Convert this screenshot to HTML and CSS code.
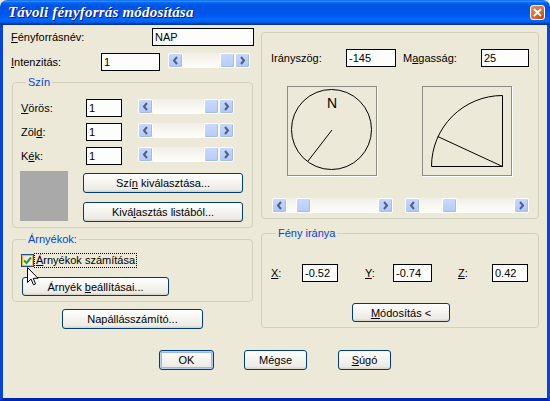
FILE: index.html
```html
<!DOCTYPE html>
<html lang="hu">
<head>
    <meta charset="UTF-8">
    <meta name="viewport" content="width=device-width, initial-scale=1.0">
    <title>Távoli fényforrás módosítása</title>
    <link rel="stylesheet" href="styles.css">
</head>
<body>
    <div class="window">
        <div class="titlebar">
            <span class="title">Távoli fényforrás módosítása</span>
            <button class="close" aria-label="Bezárás">
                <svg width="9" height="9" viewBox="0 0 9 9"><path d="M1 1L8 8M8 1L1 8" stroke="#fff" stroke-width="2"/></svg>
            </button>
        </div>
        <div class="frame">
            <div class="columns">
                <!-- left side: name, intensity, colour, shadows -->
                <div class="col-left">
                    <div class="row">
                        <label class="lbl lbl-name"><u>F</u>ényforrásnév:</label>
                        <input class="field field-name" value="NAP">
                    </div>
                    <div class="row row-int">
                        <label class="lbl lbl-int"><u>I</u>ntenzitás:</label>
                        <input class="field field-int" value="1">
                        <div class="scroll scroll-int">
                            <span class="sb-btn"><svg width="13" height="13" viewBox="0 0 13 13"><path d="M8 3L5 6.5L8 10" /></svg></span>
                            <span class="sb-track"><span class="sb-thumb thumb-end"></span></span>
                            <span class="sb-btn"><svg width="13" height="13" viewBox="0 0 13 13"><path d="M5 3L8 6.5L5 10" /></svg></span>
                        </div>
                    </div>

                    <fieldset class="group group-color">
                        <legend>Szín</legend>
                        <div class="row row-rgb">
                            <label class="lbl lbl-rgb"><u>V</u>örös:</label>
                            <input class="field field-rgb" value="1">
                            <div class="scroll scroll-rgb">
                                <span class="sb-btn"><svg width="13" height="13" viewBox="0 0 13 13"><path d="M8 3L5 6.5L8 10" /></svg></span>
                                <span class="sb-track"><span class="sb-thumb thumb-end"></span></span>
                                <span class="sb-btn"><svg width="13" height="13" viewBox="0 0 13 13"><path d="M5 3L8 6.5L5 10" /></svg></span>
                            </div>
                        </div>
                        <div class="row row-rgb">
                            <label class="lbl lbl-rgb">Zöl<u>d</u>:</label>
                            <input class="field field-rgb" value="1">
                            <div class="scroll scroll-rgb">
                                <span class="sb-btn"><svg width="13" height="13" viewBox="0 0 13 13"><path d="M8 3L5 6.5L8 10" /></svg></span>
                                <span class="sb-track"><span class="sb-thumb thumb-end"></span></span>
                                <span class="sb-btn"><svg width="13" height="13" viewBox="0 0 13 13"><path d="M5 3L8 6.5L5 10" /></svg></span>
                            </div>
                        </div>
                        <div class="row row-rgb">
                            <label class="lbl lbl-rgb">K<u>é</u>k:</label>
                            <input class="field field-rgb" value="1">
                            <div class="scroll scroll-rgb">
                                <span class="sb-btn"><svg width="13" height="13" viewBox="0 0 13 13"><path d="M8 3L5 6.5L8 10" /></svg></span>
                                <span class="sb-track"><span class="sb-thumb thumb-end"></span></span>
                                <span class="sb-btn"><svg width="13" height="13" viewBox="0 0 13 13"><path d="M5 3L8 6.5L5 10" /></svg></span>
                            </div>
                        </div>
                        <div class="swatch-row">
                            <div class="swatch"></div>
                            <div class="swatch-btns">
                                <button class="btn btn-pick">Szí<u>n</u> kiválasztása...</button>
                                <button class="btn btn-list">Kivá<u>l</u>asztás listából...</button>
                            </div>
                        </div>
                    </fieldset>

                    <fieldset class="group group-shadow">
                        <legend>Árnyékok:</legend>
                        <div class="check-row">
                            <span class="check">
                                <svg width="9" height="9" viewBox="0 0 9 9"><path d="M1 4.5L3.5 7L8 1.5" fill="none" stroke="#21a121" stroke-width="2"/></svg>
                            </span>
                            <span class="check-text"><u>Á</u>rnyékok számítása</span>
                        </div>
                        <button class="btn btn-shadow">Árnyék <u>b</u>eállításai...</button>
                    </fieldset>

                    <button class="btn btn-sun">Napállásszámító...</button>
                </div>

                <!-- right side: direction pickers -->
                <div class="col-right">
                    <div class="panel">
                        <div class="row row-angles">
                            <label class="lbl lbl-azi">Irányszög:</label>
                            <input class="field field-azi" value="-145">
                            <label class="lbl lbl-alt">M<u>a</u>gasság:</label>
                            <input class="field field-alt" value="25">
                        </div>
                        <div class="views">
                            <div class="view">
                                <svg width="88" height="88" viewBox="0 0 88 88">
                                    <circle cx="43.5" cy="42.5" r="40" fill="none" stroke="#000" stroke-width="1"/>
                                    <text x="44" y="21" text-anchor="middle" class="compass-n">N</text>
                                    <line x1="44" y1="43" x2="20" y2="74" stroke="#000" stroke-width="1"/>
                                </svg>
                            </div>
                            <div class="view view-alt">
                                <svg width="88" height="88" viewBox="0 0 88 88">
                                    <path d="M8.5 79.5A71 71 0 0 1 79.5 8.5V79.5Z" fill="none" stroke="#000" stroke-width="1"/>
                                    <line x1="79.5" y1="79.5" x2="14.7" y2="49.5" stroke="#000" stroke-width="1"/>
                                </svg>
                            </div>
                        </div>
                        <div class="row row-view-scroll">
                            <div class="scroll scroll-azi">
                                <span class="sb-btn"><svg width="13" height="13" viewBox="0 0 13 13"><path d="M8 3L5 6.5L8 10" /></svg></span>
                                <span class="sb-track"><span class="sb-thumb" style="margin-left: 9px"></span></span>
                                <span class="sb-btn"><svg width="13" height="13" viewBox="0 0 13 13"><path d="M5 3L8 6.5L5 10" /></svg></span>
                            </div>
                            <div class="scroll scroll-alt">
                                <span class="sb-btn"><svg width="13" height="13" viewBox="0 0 13 13"><path d="M8 3L5 6.5L8 10" /></svg></span>
                                <span class="sb-track"><span class="sb-thumb" style="margin-left: 22px"></span></span>
                                <span class="sb-btn"><svg width="13" height="13" viewBox="0 0 13 13"><path d="M5 3L8 6.5L5 10" /></svg></span>
                            </div>
                        </div>
                    </div>

                    <fieldset class="group group-dir">
                        <legend>Fény iránya</legend>
                        <div class="row row-xyz">
                            <label class="lbl lbl-x"><u>X</u>:</label>
                            <input class="field field-x" value="-0.52">
                            <label class="lbl lbl-y"><u>Y</u>:</label>
                            <input class="field field-y" value="-0.74">
                            <label class="lbl lbl-z"><u>Z</u>:</label>
                            <input class="field field-z" value="0.42">
                        </div>
                        <button class="btn btn-modify"><u>M</u>ódosítás &lt;</button>
                    </fieldset>
                </div>
            </div>

            <div class="actions">
                <button class="btn btn-ok">OK</button>
                <button class="btn btn-cancel">Mégse</button>
                <button class="btn btn-help"><u>S</u>úgó</button>
            </div>
        </div>

        <svg class="cursor" width="12" height="19" viewBox="0 0 12 19">
            <path d="M0.5 0.5V15.5L4 12L6.5 17.8L8.6 16.9L6.2 11.3H11Z" fill="#fff" stroke="#000" stroke-width="1"/>
        </svg>
    </div>
</body>
</html>
```

FILE: styles.css
```css
/* Window frame */
body {
    margin: 0;
    font-family: 'Liberation Sans', Arial, sans-serif;
    font-size: 11px;
    color: #000;
    background: #ece9d8;
}

.window {
    position: relative;
    width: 550px;
    height: 401px;
    display: flex;
    flex-direction: column;
}

.titlebar {
    height: 25px;
    box-sizing: border-box;
    display: flex;
    align-items: center;
    justify-content: space-between;
    padding: 0 5px 0 8px;
    border-radius: 7px 7px 0 0;
    background: linear-gradient(to bottom, #0058ee 0%, #3593ff 4%, #288eff 6%, #127dff 8%, #036ffc 10%, #0262ee 14%, #0057e5 20%, #0054e3 24%, #0055eb 56%, #005bf5 66%, #026afe 76%, #0062ef 86%, #0052d6 92%, #0040ab 94%, #003092 100%);
}

.title {
    font-family: 'Liberation Serif', 'Times New Roman', serif;
    font-weight: bold;
    font-style: italic;
    font-size: 15px;
    color: #fff;
    text-shadow: 1px 1px #0f1089;
    letter-spacing: 0.2px;
}

.close {
    width: 15px;
    height: 15px;
    padding: 0;
    display: flex;
    align-items: center;
    justify-content: center;
    border: 1px solid #fff;
    border-radius: 3px;
    background: radial-gradient(circle at 80% 85%, #cc4600 0%, #dc6527 40%, #e5805a 80%, #f2a48a 100%);
}

.frame {
    flex: 1;
    border: 3px solid #0843d6;
    border-top: 0;
    border-bottom-color: #0025b0;
    padding: 3px 8px 0 8px;
    background: #ece9d8;
}

.columns {
    display: flex;
}

.col-left {
    width: 244px;
}

.col-right {
    width: 278px;
    margin-left: 6px;
}

/* Generic controls */
.row {
    display: flex;
    align-items: center;
    height: 18px;
}

.lbl {
    flex: none;
    white-space: nowrap;
}

.field {
    box-sizing: border-box;
    height: 18px;
    border: 1px solid #000;
    background: #fdfdfb;
    font: inherit;
    padding: 0 2px;
    margin: 0;
}

.btn {
    box-sizing: border-box;
    height: 20px;
    padding: 0;
    border: 1px solid #003c74;
    border-radius: 3px;
    background: linear-gradient(to bottom, #fff 0%, #f4f3ee 50%, #ecebe6 86%, #d6d0c5 100%);
    font: inherit;
    color: #000;
}

.scroll {
    display: flex;
    height: 15px;
    align-self: flex-start;
}

.sb-btn {
    width: 15px;
    height: 15px;
    box-sizing: border-box;
    display: flex;
    align-items: center;
    justify-content: center;
    border: 1px solid #fff;
    border-radius: 2px;
    background: linear-gradient(to bottom, #c8d8fd 0%, #bccffb 50%, #b2c8f7 100%);
    box-shadow: inset -1px -1px #a4bcec;
}

.sb-btn path {
    fill: none;
    stroke: #4d6185;
    stroke-width: 2;
}

.sb-track {
    flex: 1;
    display: flex;
    background: linear-gradient(to bottom, #f1efe6, #fefefb);
}

.sb-thumb {
    width: 15px;
    height: 15px;
    box-sizing: border-box;
    border: 1px solid #fff;
    border-radius: 2px;
    background: linear-gradient(to bottom, #c9d9fd, #b5cbf9);
    box-shadow: inset -1px -1px #a4bcec;
}

.thumb-end {
    margin-left: auto;
}

/* Group boxes */
.group {
    box-sizing: border-box;
    margin: 0;
    min-width: 0;
    border: 1px solid #d0d0bf;
    border-radius: 4px;
}

.group legend {
    padding: 0 2px;
    margin-left: 5px;
    line-height: 13px;
    color: #0046d5;
}

/* Left column */
.lbl-name {
    width: 141px;
}

.field-name {
    width: 102px;
}

.row-int {
    margin-top: 7px;
}

.lbl-int {
    width: 90px;
}

.field-int {
    width: 59px;
}

.scroll-int {
    width: 82px;
    margin-left: 8px;
}

.group-color {
    width: 241px;
    margin: 5px 0 0 1px;
    padding: 10px 8px 5px 8px;
}

.row-rgb {
    margin-bottom: 6px;
}

.lbl-rgb {
    width: 65px;
}

.field-rgb {
    width: 36px;
}

.scroll-rgb {
    width: 96px;
    margin-left: 16px;
}

.swatch-row {
    display: flex;
}

.swatch {
    width: 48px;
    height: 50px;
    margin-left: -1px;
    background: #a9a9a9;
}

.swatch-btns {
    display: flex;
    flex-direction: column;
    margin-left: 15px;
}

.btn-pick,
.btn-list {
    width: 160px;
}

.btn-pick {
    margin-top: 2px;
}

.btn-list {
    margin-top: 9px;
}

.group-shadow {
    width: 241px;
    margin: 5px 0 0 1px;
    padding: 7px 8px 5px 8px;
}

.check-row {
    display: flex;
    align-items: center;
    height: 15px;
}

.check {
    width: 13px;
    height: 13px;
    box-sizing: border-box;
    display: flex;
    align-items: center;
    justify-content: center;
    border: 1px solid #1c5180;
    background: linear-gradient(135deg, #dcdcd7, #fff);
    box-shadow: inset 0 0 0 1px #f8b636;
}

.check-text {
    margin-left: 1px;
    padding: 0 1px;
    line-height: 13px;
    outline: 1px dotted #000;
}

.btn-shadow {
    width: 147px;
    height: 19px;
    margin: 9px 0 0 1px;
}

.btn-sun {
    width: 141px;
    margin: 7px 0 0 51px;
}

/* Right column */
.panel {
    box-sizing: border-box;
    height: 187px;
    margin-top: 4px;
    padding: 16px 9px 0 9px;
    border: 1px solid #d0d0bf;
    border-radius: 4px;
}

.lbl-azi {
    width: 75px;
}

.field-azi {
    width: 50px;
}

.lbl-alt {
    width: 78px;
    margin-left: 7px;
}

.field-alt {
    width: 48px;
}

.views {
    display: flex;
    margin: 19px 0 0 16px;
}

.view {
    width: 90px;
    height: 90px;
    box-sizing: border-box;
    border: 1px solid #8d8d86;
    box-shadow: 1px 1px #fff;
}

.view svg {
    display: block;
}

.view-alt {
    margin-left: 45px;
}

.compass-n {
    font-family: 'Liberation Sans', Arial, sans-serif;
    font-size: 14px;
}

.row-view-scroll {
    margin: 22px 0 0 1px;
    height: 15px;
}

.scroll-azi {
    width: 121px;
}

.scroll-alt {
    width: 124px;
    margin-left: 12px;
}

.group-dir {
    width: 278px;
    margin-top: 8px;
    padding: 24px 9px 5px 9px;
}

.lbl-x {
    width: 31px;
}

.field-x,
.field-z {
    width: 36px;
}

.lbl-y {
    width: 28px;
    margin-left: 27px;
}

.field-y {
    width: 39px;
}

.lbl-z {
    width: 34px;
    margin-left: 26px;
}

.btn-modify {
    width: 98px;
    height: 19px;
    margin: 21px 0 0 81px;
}

/* Bottom buttons */
.actions {
    display: flex;
    margin-top: 21px;
}

.btn-ok {
    width: 55px;
    margin-left: 148px;
    box-shadow: inset 0 0 0 1px #b9d0f5, inset 0 0 0 2px #9ab8ee;
}

.btn-cancel {
    width: 63px;
    margin-left: 30px;
}

.btn-help {
    width: 53px;
    margin-left: 31px;
}

.cursor {
    position: absolute;
    left: 27px;
    top: 267px;
}
```
